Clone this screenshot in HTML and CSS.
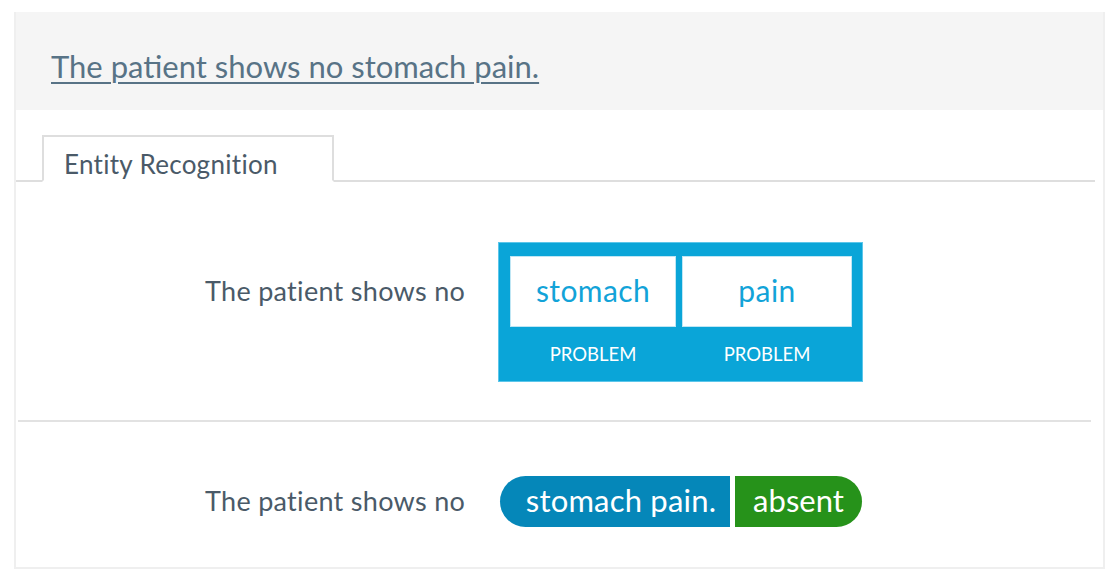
FILE: index.html
```html
<!DOCTYPE html>
<html>
<head>
<meta charset="utf-8">
<link rel="stylesheet" href="styles.css">
</head>
<body>
<div class="panel">
  <div class="header">
    <a class="title" href="#">The patient shows no stomach pain.</a>
  </div>
  <div class="tabs">
    <div class="tab">Entity Recognition</div>
  </div>
  <div class="row row-ner">
    <div class="plain">The patient shows no</div>
    <div class="ner">
      <div class="ent">
        <div class="word">stomach</div>
        <div class="label">PROBLEM</div>
      </div>
      <div class="ent ent-last">
        <div class="word">pain</div>
        <div class="label">PROBLEM</div>
      </div>
    </div>
  </div>
  <div class="sep"></div>
  <div class="row row-assert">
    <div class="plain">The patient shows no</div>
    <div class="pill">
      <span class="pill-ent">stomach pain.</span>
      <span class="pill-status">absent</span>
    </div>
  </div>
</div>
</body>
</html>
```

FILE: styles.css
```css
* { box-sizing: border-box; }
html, body { margin: 0; padding: 0; background: #ffffff; }
body {
  font-family: Lato, "Open Sans", "Liberation Sans", sans-serif;
  color: #4a5a68;
}
.panel {
  margin: 12px 0 0 14px;
  width: 1091px;
  height: 557px;
  border: 2px solid #efefef;
  border-top: 0;
  background: #fff;
  display: flex;
  flex-direction: column;
}
.header {
  height: 98px;
  background: #f5f5f5;
  padding: 36px 0 0 35px;
}
.title {
  font-size: 31px;
  line-height: 36px;
  color: #587386;
  text-decoration: underline;
  text-decoration-thickness: 2px;
  text-underline-offset: 4px;
}
.tabs {
  margin-top: 25px;
  margin-right: 8px;
  border-bottom: 2px solid #dedede;
  display: flex;
  padding-left: 26px;
  height: 47px;
}
.tab {
  height: 47px;
  width: 292px;
  border: 2px solid #dedede;
  border-bottom: 2px solid #fff;
  background: #fff;
  padding: 0 0 0 20px;
  font-size: 26px;
  letter-spacing: 0.3px;
  line-height: 54px;
  color: #4a5a68;
}
.row {
  display: flex;
  align-items: flex-start;
  padding-left: 189px;
}
.plain {
  font-size: 27px;
  letter-spacing: 0.3px;
  color: #4a5a68;
  white-space: nowrap;
}
.row-ner { padding-top: 60px; height: 238px; }
.row-ner .plain { margin-top: 13px; line-height: 72px; width: 293px; }
.ner {
  display: flex;
  gap: 6px;
  background: #0aa5d8;
  border: 1px solid #5cc6ea;
  padding: 13px 10px 0 11px;
  height: 140px;
}
.ent { display: flex; flex-direction: column; width: 166px; }
.ent-last { width: 170px; }
.word {
  height: 72px;
  background: #fff;
  border: 1px solid #bfe6f4;
  color: #12a3d8;
  font-size: 30px;
  letter-spacing: 0.4px;
  line-height: 66px;
  text-align: center;
}
.label {
  color: #fff;
  font-size: 18.5px;
  text-align: center;
  line-height: 54px;
}
.sep {
  height: 2px;
  background: #e2e2e2;
  margin: 0 12px 0 2px;
}
.row-assert { padding-top: 54px; }
.row-assert .plain { line-height: 49px; width: 295px; }
.pill { display: flex; gap: 5px; height: 51px; }
.pill-ent {
  background: #0587b9;
  color: #fff;
  border-radius: 26px 0 0 26px;
  width: 230px;
  padding-left: 12px;
  font-size: 31px;
  letter-spacing: 0.2px;
  line-height: 48px;
  text-align: center;
  white-space: nowrap;
}
.pill-status {
  background: #26921a;
  color: #fff;
  border-radius: 0 26px 26px 0;
  width: 127px;
  font-size: 31px;
  line-height: 48px;
  text-align: center;
}
```
